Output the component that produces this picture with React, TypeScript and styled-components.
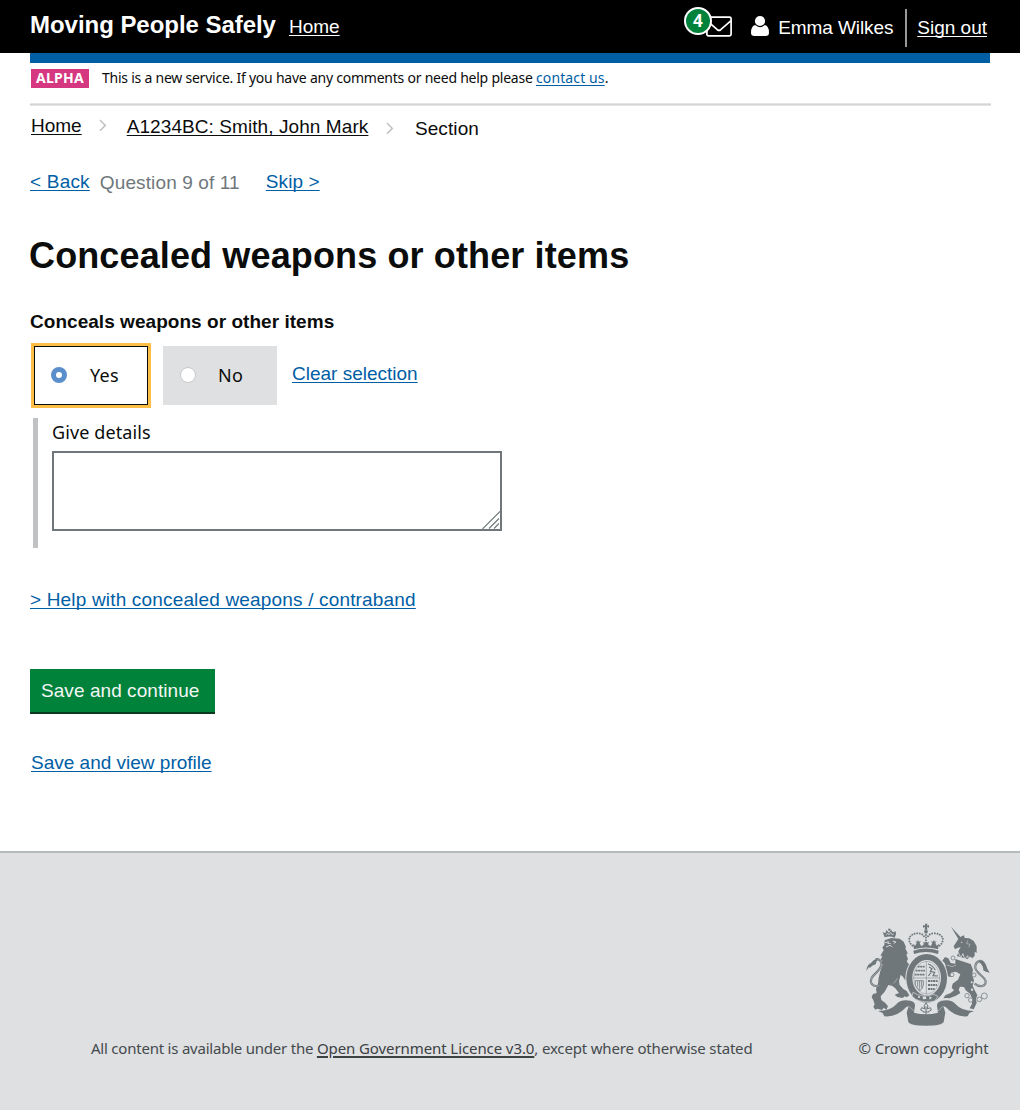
import React, { useState } from 'react';
import styled, { createGlobalStyle, css } from 'styled-components';

const helvetica = '"Liberation Sans", Arial, sans-serif';
const transport = '"Noto Sans", "Open Sans", sans-serif';

const GlobalStyle = createGlobalStyle`
  * { box-sizing: border-box; }
  body { margin: 0; background: #fff; color: #0b0c0c; font: 19px/21px ${helvetica}; }
  p, h1, h2 { margin: 0; }
`;

const underline = css`
  text-decoration: underline;
  text-decoration-thickness: 1px;
  text-underline-offset: 2px;
  text-decoration-skip-ink: none;
`;

const Page = styled.div`
  display: flex;
  flex-direction: column;
  min-height: 1110px;
`;

/* Header */

const Header = styled.header`
  display: flex;
  justify-content: space-between;
  height: 53px;
  padding: 0 33px 0 30px;
  background: #000;
  color: #fff;
`;

const HeaderGroup = styled.div`
  display: flex;
  align-items: flex-start;
  white-space: nowrap;
`;

const ServiceName = styled.span`
  margin: 11px 13px 0 0;
  font-size: 24px;
  line-height: 27px;
  font-weight: 700;
  letter-spacing: -0.04px;
`;

const HeaderLink = styled.a<{ $top: number }>`
  ${underline}
  margin-top: ${(p) => p.$top}px;
  color: #fff;
`;

const Messages = styled.a`
  position: relative;
  display: block;
  width: 26px;
  height: 21px;
  margin: 16px 19px 0 0;
  svg { display: block; }
`;

const Count = styled.span`
  position: absolute;
  left: -22px;
  top: -9px;
  width: 28px;
  height: 28px;
  padding-right: 1px;
  border: 2px solid #fff;
  border-radius: 50%;
  background: #00823b;
  color: #fff;
  font: 700 17px/23px ${transport};
  text-align: center;
`;

const PersonIcon = styled.svg`
  margin: 15px 9px 0 0;
`;

const UserName = styled.span`
  margin-top: 17px;
  width: 127px;
  letter-spacing: -0.1px;
`;

const Divider = styled.span`
  width: 2px;
  height: 38px;
  margin: 9px 10px 0 0;
  background: #999;
`;

/* Phase banner and navigation */

const Container = styled.div`
  padding: 0 29px 0 30px;
`;

const BlueBar = styled.div`
  height: 10px;
  margin-right: 1px;
  background: #005ea5;
`;

const PhaseBanner = styled.div`
  display: flex;
  align-items: flex-start;
  height: 40px;
  padding: 5px 0 0 1px;
`;

const PhaseTag = styled.strong`
  width: 58px;
  height: 19px;
  margin: 1px 13px 0 0;
  background: #d53880;
  color: #fff;
  font: 700 14px/17px ${transport};
  letter-spacing: 0.25px;
  text-align: center;
`;

const PhaseText = styled.p`
  font: 14px/19px ${transport};
  letter-spacing: -0.235px;
`;

const Link = styled.a<{ $ls?: number }>`
  ${underline}
  color: #005ea5;
  letter-spacing: ${(p) => p.$ls ?? 0}px;
`;

const Rule = styled.div`
  height: 3px;
  border: solid #e3e4e5;
  border-width: 1px 0;
  background: #d3d4d5;
`;

const Breadcrumbs = styled.nav`
  display: flex;
  align-items: flex-start;
  height: 59px;
  padding: 9px 0 0 1px;
  white-space: nowrap;
`;

const Crumb = styled.a<{ $drop?: number; $ls?: number; $plain?: boolean }>`
  ${(p) => !p.$plain && underline}
  margin-top: ${(p) => p.$drop ?? 0}px;
  color: #0b0c0c;
  letter-spacing: ${(p) => p.$ls ?? 0}px;
`;

const ChevronSvg = styled.svg<{ $m: string }>`
  margin: ${(p) => p.$m};
`;

const Pager = styled.div`
  display: flex;
  align-items: flex-start;
  padding-top: 6px;
`;

const Progress = styled.span`
  margin: 1px 26px 0 10px;
  color: #6f777b;
  letter-spacing: 0.12px;
`;

/* Question */

const Title = styled.h1`
  margin: 42px 0 0 -1px;
  font-size: 36px;
  line-height: 41px;
  letter-spacing: 0.13px;
`;

const Legend = styled.h2`
  margin-top: 35px;
  font-size: 19px;
  line-height: 21px;
  letter-spacing: 0.04px;
`;

const Options = styled.div`
  display: flex;
  align-items: flex-start;
  gap: 15px;
  padding: 14px 0 0 4px;
`;

const Option = styled.label<{ $checked: boolean }>`
  display: flex;
  align-items: center;
  width: 114px;
  height: 59px;
  padding: 0 0 1px ${(p) => (p.$checked ? 16 : 17)}px;
  border: ${(p) => (p.$checked ? '1px solid #0b0c0c' : '0')};
  background: ${(p) => (p.$checked ? '#fff' : '#dee0e2')};
  box-shadow: ${(p) => (p.$checked ? '0 0 0 3px #ffbf47' : 'none')};
  font: 18px/24px ${transport};
  letter-spacing: 0.3px;
`;

const Radio = styled.input<{ $checked: boolean }>`
  appearance: none;
  width: 16px;
  height: 16px;
  margin: 0 ${(p) => (p.$checked ? 23 : 22)}px 0 0;
  border: ${(p) => (p.$checked ? '5px solid #5b8fcb' : '1px solid #c6c8ca')};
  border-radius: 50%;
  background: #fff;
`;

const OptionText = styled.span`
  margin-bottom: 1px;
`;

const ClearLink = styled(Link)`
  margin-top: 17px;
`;

const Details = styled.div`
  width: 470px;
  height: 130px;
  margin: 13px 0 0 3px;
  padding: 2px 0 0 14px;
  border-left: 5px solid #bfc1c3;
`;

const DetailsLabel = styled.label`
  display: block;
  margin-bottom: 7px;
  font: 18px/24px ${transport};
  letter-spacing: 0.1px;
`;

const FieldWrap = styled.div`
  position: relative;
  width: 450px;
  height: 80px;
`;

const Field = styled.textarea`
  display: block;
  width: 100%;
  height: 100%;
  border: 2px solid #6f777b;
  background: #fff;
  resize: none;
  outline: none;
`;

const Grip = styled.svg`
  position: absolute;
  right: 2px;
  bottom: 2px;
`;

const HelpLine = styled.p`
  margin-top: 41px;
`;

const SaveButton = styled.button`
  display: block;
  width: 185px;
  height: 45px;
  margin: 59px 0 0;
  padding: 0 0 1px 11px;
  border: 0;
  border-bottom: 2px solid #0c3a20;
  background: #00823b;
  color: #f3f6f4;
  font: 19px/21px ${helvetica};
  letter-spacing: 0.06px;
  text-align: left;
`;

const ProfileLine = styled.p`
  margin: 38px 0 0 1px;
`;

/* Footer */

const Footer = styled.footer`
  display: flex;
  justify-content: space-between;
  align-items: flex-end;
  height: 259px;
  margin-top: auto;
  padding: 0 30px 52px 91px;
  border-top: 2px solid #b5babd;
  background: #dee0e2;
  color: #454a4d;
  font: 15px/20px ${transport};
  white-space: nowrap;
`;

const Licence = styled.p`
  letter-spacing: -0.22px;
`;

const LicenceLink = styled.a`
  color: #3c4144;
  letter-spacing: -0.09px;
  text-decoration: underline;
  text-decoration-thickness: 2px;
  text-underline-offset: 2px;
`;

const LicenceTail = styled.span`
  letter-spacing: -0.17px;
`;

const Copyright = styled.div`
  display: flex;
  flex-direction: column;
  align-items: flex-end;
  gap: 11px;
  letter-spacing: -0.14px;
  p { margin-right: 1.5px; }
`;

const Chevron = ({ m }: { m: string }) => (
  <ChevronSvg $m={m} width="8" height="13" viewBox="0 0 8 13" fill="none" stroke="#bfc1c3" strokeWidth="1.5">
    <path d="M1 1l5.3 5.4L1 11.8" />
  </ChevronSvg>
);

const pearls = { strokeDasharray: '0.1 7.6', strokeLinecap: 'round' as const, strokeWidth: 5.8 };

const tail = 'M88 228C69 233 59 220 64 207C68 195 91 183 94 166C96 152 84 146 76 150';
const unicornTail = 'M374 222C389 235 408 230 407 215C404 200 380 192 376 176C374 156 391 149 399 158';

const Crest = () => (
  <svg width="124" height="104" viewBox="48 40 372 312" fill="#6f777b" stroke="none">
    {/* royal crown */}
    <path d="M225 42h7l-1 6 6-2v8l-6-2 1 8h-8l1-8-6 2v-8l6 2z" />
    <circle cx="228" cy="66" r="5.5" />
    <g fill="none" stroke="#6f777b" {...pearls}>
      <path d="M187 108C168 90 180 72 202 71Q217 71 222 80" />
      <path d="M269 108C288 90 276 72 254 71Q239 71 234 80" />
      <path d="M228 76v24" />
    </g>
    <path d="M189 102l7 6 4-8-4-5 6 1 2-6 3 6 6-1-4 6 5 9 8-6-3-7 9 2 9-2-3 7 8 6 5-9-4-6 6 1 3-6 2 6 6-1-4 5 4 8 7-6-3 17q-36-11-72 0z" />
    <path d="M190 123q38-13 76 0l-2 10q-36-12-72 0z" />

    {/* ribbon */}
    <path d="M84 304Q122 304 139 284Q151 268 181 273Q199 277 194 294L192 309Q228 318 264 309L262 294Q257 277 275 273Q305 268 317 284Q334 304 372 304L358 310 353 320Q316 324 288 293L280 289 286 309 281 337Q276 348 228 348Q180 348 175 337L170 309 176 289 168 293Q140 324 103 320L98 310z" />
    <path d="M178 291L192 304M278 291L264 304" fill="none" stroke="#dee0e2" strokeWidth="1.5" />

    {/* lion */}
    <path d="M104 92L124 85 149 87 161 96 168 112 166 116 173 131 169 135 174 148 170 155 178 166 184 186 182 195 190 212 180 217 166 212 157 199 152 196 147 214 149 226 160 238 170 244 178 257 170 263 164 260 158 265 142 262 134 255 147 250 136 236 126 228 115 226 104 246 92 260 94 271 106 280 114 290 109 300 101 294 96 301 82 297 76 300 70 292 74 284 70 272 65 262 69 253 80 250 78 238 84 222 86 204 91 184 99 164 92 168 97 151 91 153 97 138 91 138 101 122 97 113 103 107z" />
    <path d="M104 83L98 67 106 71 109 61 117 69 123 60 129 68 137 65 138 74 134 84Q119 78 104 83z" />
    <circle cx="118" cy="60" r="3.5" />
    <path d="M108 77l5-7 4 6 5-8 4 8 6-4" fill="none" stroke="#dee0e2" strokeWidth="2" />
    <path d="M105 99L116 96 113 101 122 102M128 94L138 97 131 101M108 112L120 107 127 112" fill="none" stroke="#dee0e2" strokeWidth="2.6" />
    <path d="M142 206L131 222" fill="none" stroke="#dee0e2" strokeWidth="1.3" />
    <path d={tail} fill="none" stroke="#6f777b" strokeWidth="6.5" />
    <path d={tail} fill="none" stroke="#dee0e2" strokeWidth="1.3" />
    <path d="M49 184Q50 165 64 159 72 147 86 149 78 153 77 164 67 166 60 174L56 173z" />

    {/* unicorn */}
    <path d="M303 51L335 86 328 93z" />
    <path d="M311 110L325 88 335 80 342 77 344 85 358 86 371 94 380 110 380 130 374 126 374 138 366 147 360 140 354 149 320 139 327 121 332 112 322 115 315 119z" />
    <circle cx="335" cy="98" r="2" fill="#dee0e2" />
    <path d="M353 92L350 102 360 104 356 113" fill="none" stroke="#dee0e2" strokeWidth="1.4" />
    <path d="M320 138L325 128 332 144 339 132 344 149 353 138 356 153 366 144 364 159" fill="none" stroke="#dee0e2" strokeWidth="2.4" />
    <path d="M316 148L362 163 369 180 366 196 372 212 368 228 374 242 382 256 378 268 380 280 371 299 359 296 366 282 366 266 360 252 347 242 342 232 330 231 326 240 331 250 318 258 298 266 290 265 280 266 286 257 302 250 312 242 305 234 308 222 324 210 331 194 318 186 303 188 308 200 300 202 291 198 287 181 279 172 288 171 284 160 277 153 285 142 295 146 302 160 316 162z" />
    <path d="M290 166L306 171 318 166" fill="none" stroke="#dee0e2" strokeWidth="1.5" />
    <g fill="none" stroke="#6f777b" strokeWidth="2.2">
      <circle cx="309" cy="145" r="6" /><circle cx="306" cy="195" r="6" fill="#dee0e2" /><circle cx="372" cy="196" r="6" fill="#dee0e2" />
      <circle cx="351" cy="258" r="6.5" fill="#dee0e2" /><circle cx="362" cy="271" r="6.5" fill="#dee0e2" /><circle cx="388" cy="269" r="7" /><circle cx="403" cy="259" r="9" />
    </g>
    <g fill="#dee0e2"><circle cx="365" cy="218" r="3" /><circle cx="366" cy="240" r="3.5" /></g>
    <path d={unicornTail} fill="none" stroke="#6f777b" strokeWidth="6.5" />
    <path d={unicornTail} fill="none" stroke="#dee0e2" strokeWidth="1.3" />
    <path d="M385 155Q401 149 408 166 411 178 419 189 406 188 400 182 401 169 385 155z" />

    {/* garter and shield */}
    <ellipse cx="230" cy="206" rx="64" ry="76" fill="#dee0e2" />
    <ellipse cx="230" cy="206" rx="61" ry="73" />
    <ellipse cx="230" cy="204" rx="43" ry="53" fill="#dee0e2" />
    <g fill="none" stroke="#6f777b">
      <ellipse cx="230" cy="204" rx="39" ry="49" strokeWidth="1.2" />
      <path d="M229 155v98M190 205h80" strokeWidth="1.5" />
      <path d="M203 171h21M197 183h28M194 195h31M234 214h30M234 226h27M234 238h20" strokeWidth="5.5" strokeDasharray="6 1.6" />
      <path d="M234 163Q250 168 256 182M237 172L246 177 241 185 254 188 249 198 264 199M235 199L243 189" strokeWidth="3.6" />
      <path d="M196 213L220 213Q223 234 209 244L196 227zM203 214v17M209 214v26M215 214v20" strokeWidth="2.4" />
    </g>
    <path d="M189 248Q216 266 251 254L264 260 254 274Q222 281 197 269L186 260z" stroke="#dee0e2" strokeWidth="2" />
    <g fill="#dee0e2"><circle cx="207" cy="262" r="3" /><path d="M218 261l9-1 2 8-10 1zM238 260l8 4-7 6z" /></g>
    <g fill="none" stroke="#6f777b" strokeWidth="3">
      <path d="M228 280l6 9-3 9 10-4 3 7-9 5M228 280l-6 9 3 9-10-4-3 7 9 5M228 290v27M219 307h18M223 316l5 5 5-5" />
    </g>
  </svg>
);

export default function App() {
  const [choice, setChoice] = useState('Yes');

  return (
    <Page>
      <GlobalStyle />
      <Header>
        <HeaderGroup>
          <ServiceName>Moving People Safely</ServiceName>
          <HeaderLink $top={16}>Home</HeaderLink>
        </HeaderGroup>
        <HeaderGroup>
          <Messages>
            <svg width="26" height="21" viewBox="0 0 26 21" fill="none" stroke="#fff" strokeWidth="1.7">
              <rect x="0.9" y="1.2" width="24.2" height="18.6" rx="1.6" />
              <path d="M1.2 4.8L11.3 13.7Q13 15 14.7 13.7L24.8 4.8" />
            </svg>
            <Count>4</Count>
          </Messages>
          <PersonIcon width="18" height="22" viewBox="0 0 18 22" fill="#fff">
            <circle cx="9" cy="6" r="5.1" />
            <path d="M4.2 10.1Q6.3 12.2 9 12.2t4.8-2.1Q18 11 18 17.8 18 21 14.6 21H3.4Q0 21 0 17.8 0 11 4.2 10.1z" />
          </PersonIcon>
          <UserName>Emma Wilkes</UserName>
          <Divider />
          <HeaderLink $top={17}>Sign out</HeaderLink>
        </HeaderGroup>
      </Header>

      <Container>
        <BlueBar />
        <PhaseBanner>
          <PhaseTag>ALPHA</PhaseTag>
          <PhaseText>
            This is a new service. If you have any comments or need help please <Link $ls={0.12}>contact us</Link>.
          </PhaseText>
        </PhaseBanner>
        <Rule />
        <Breadcrumbs>
          <Crumb>Home</Crumb>
          <Chevron m="4px 20px 0 17px" />
          <Crumb $drop={1} $ls={0.08}>A1234BC: Smith, John Mark</Crumb>
          <Chevron m="7px 20.5px 0 18px" />
          <Crumb $drop={3} $plain $ls={0.1}>Section</Crumb>
        </Breadcrumbs>

        <Pager>
          <Link $ls={0.2}>&lt; Back</Link>
          <Progress>Question 9 of 11</Progress>
          <Link $ls={0.1}>Skip &gt;</Link>
        </Pager>

        <Title>Concealed weapons or other items</Title>
        <Legend>Conceals weapons or other items</Legend>

        <Options>
          {['Yes', 'No'].map((value) => (
            <Option key={value} $checked={choice === value}>
              <Radio
                type="radio"
                name="conceals"
                $checked={choice === value}
                checked={choice === value}
                onChange={() => setChoice(value)}
              />
              <OptionText>{value}</OptionText>
            </Option>
          ))}
          <ClearLink onClick={() => setChoice('')}>Clear selection</ClearLink>
        </Options>

        <Details>
          <DetailsLabel htmlFor="details">Give details</DetailsLabel>
          <FieldWrap>
            <Field id="details" />
            <Grip width="18" height="18" viewBox="0 0 18 18" fill="none" stroke="#6f777b" strokeWidth="1.1">
              <path d="M0.5 18L18 0.5M7 17.5L17 7.5M12 17.5L17 12.5" />
            </Grip>
          </FieldWrap>
        </Details>

        <HelpLine>
          <Link $ls={0.17}>&gt; Help with concealed weapons / contraband</Link>
        </HelpLine>
        <SaveButton type="button">Save and continue</SaveButton>
        <ProfileLine>
          <Link>Save and view profile</Link>
        </ProfileLine>
      </Container>

      <Footer>
        <Licence>
          All content is available under the <LicenceLink>Open Government Licence v3.0</LicenceLink>
          <LicenceTail>, except where otherwise stated</LicenceTail>
        </Licence>
        <Copyright>
          <Crest />
          <p>© Crown copyright</p>
        </Copyright>
      </Footer>
    </Page>
  );
}
